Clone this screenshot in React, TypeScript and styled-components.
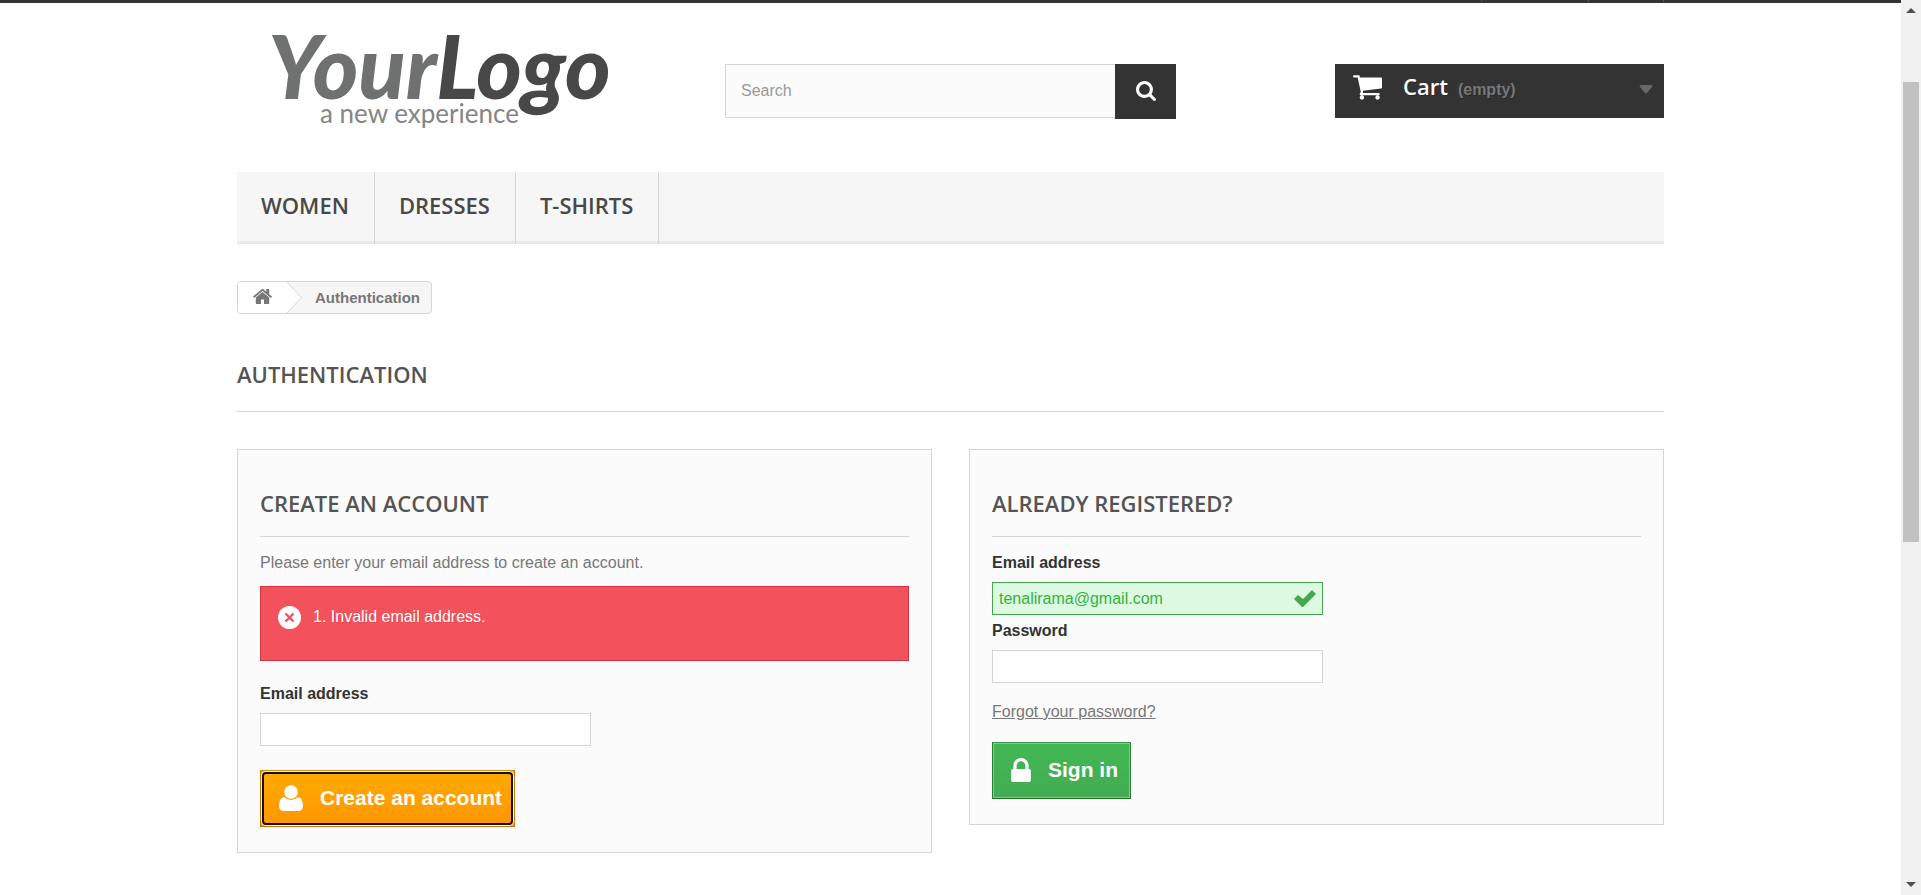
import React from 'react';
import styled, { createGlobalStyle, css } from 'styled-components';

const GlobalStyle = createGlobalStyle`
  * { box-sizing: border-box; }
  body {
    margin: 0;
    background: #fff;
    color: #777;
    font: 16px/22px "Liberation Sans", Arial, sans-serif;
  }
  button, input { font-family: inherit; }
  h1, h2, p, ul, ol { margin: 0; padding: 0; }
`;

const headingFont = '"Open Sans", sans-serif';

const Shell = styled.div`
  display: flex;
  min-height: 100vh;
`;

const Page = styled.div`
  flex: 1;
  min-width: 0;
`;

const Container = styled.div`
  width: calc(100% - 36px);
  max-width: 1427px;
  margin: 0 auto;
`;

const TopBar = styled.div`
  height: 3px;
  background: #333;
`;

const TopLinks = styled(Container)`
  display: flex;
  justify-content: flex-end;
  height: 2px;
`;

const TopLink = styled.span<{ $width: number }>`
  width: ${(p) => p.$width}px;
  border-right: 1px solid #515151;
`;

const Header = styled.header`
  display: grid;
  grid-template-columns: repeat(3, 1fr);
  gap: 37px;
  height: 169px;
`;

const LogoLink = styled.a`
  display: block;
`;

const LogoArt = styled.svg`
  display: block;
  width: 100%;
  height: 140px;
`;

const SearchForm = styled.form`
  display: flex;
  align-items: flex-start;
  padding-top: 61px;
`;

const SearchInput = styled.input`
  flex: 1;
  min-width: 0;
  height: 54px;
  padding: 0 15px;
  border: 1px solid #d6d4d4;
  border-right: 0;
  border-radius: 0;
  background: #fbfbfb;
  color: #686666;
  font-size: 16px;
  &::placeholder { color: #999; opacity: 1; }
`;

const SearchButton = styled.button`
  display: flex;
  align-items: center;
  justify-content: center;
  width: 61px;
  height: 55px;
  padding: 0 0 2px;
  border: 0;
  background: #333;
  color: #fff;
`;

const CartArea = styled.div`
  display: flex;
  justify-content: flex-end;
  align-items: flex-start;
  padding-top: 61px;
`;

const CartLink = styled.a`
  display: flex;
  align-items: center;
  width: 329px;
  height: 54px;
  padding: 0 11px 8px 18px;
  background: #333;
  color: #fff;
  text-decoration: none;
  text-shadow: 1px 1px rgba(0, 0, 0, 0.2);
`;

const CartText = styled.span`
  margin: 2px 0 0 21px;
  color: #777;
  font-weight: bold;
`;

const CartTitle = styled.b`
  margin-right: 10px;
  color: #fff;
  font: 600 22px/22px ${headingFont};
`;

const CartArrow = styled.svg`
  margin: 4px 0 0 auto;
`;

const Nav = styled.nav`
  background: #f6f6f6;
  border-bottom: 3px solid #e9e9e9;
`;

const NavList = styled.ul`
  display: flex;
  list-style: none;
  margin-bottom: -3px;
`;

const NavLink = styled.a`
  display: block;
  height: 72px;
  padding: 20px 25px 0 24px;
  border-right: 1px solid #d6d4d4;
  color: #484848;
  font: 600 22px/26px ${headingFont};
  text-decoration: none;
`;

const Breadcrumb = styled.nav`
  display: inline-flex;
  height: 33px;
  margin-top: 37px;
  border: 1px solid #d6d4d4;
  border-radius: 4px;
  overflow: hidden;
  background: #f6f6f6;
  color: #777;
  font: bold 15px/31px "Liberation Sans", Arial, sans-serif;
`;

const HomeLink = styled.a`
  display: flex;
  justify-content: flex-end;
  align-items: center;
  width: 34px;
  padding-bottom: 3px;
  background: #fff;
  color: #777;
`;

const Chevron = styled.svg`
  display: block;
`;

const Crumb = styled.span`
  padding: 0 11px 0 13px;
`;

const PageHeading = styled.h1`
  margin: 47px 0 37px;
  padding-bottom: 23px;
  border-bottom: 1px solid #d6d4d4;
  color: #555454;
  font: 600 22px/27px ${headingFont};
`;

const Columns = styled.main`
  display: grid;
  grid-template-columns: 1fr 1fr;
  gap: 37px;
  align-items: start;
  padding-bottom: 37px;
`;

const Box = styled.form`
  padding: 40px 22px 25px;
  border: 1px solid #d6d4d4;
  background: #fbfbfb;
`;

const BoxHeading = styled.h2`
  margin-bottom: 15px;
  padding-bottom: 19px;
  border-bottom: 1px solid #d6d4d4;
  color: #555454;
  font: 600 22px/27px ${headingFont};
`;

const ErrorBox = styled.div`
  display: flex;
  height: 75px;
  margin: 12px 0 22px;
  padding: 19px 17px;
  border: 1px solid #d4323d;
  background: #f3515c;
  color: #fff;
  text-shadow: 1px 1px rgba(0, 0, 0, 0.1);
`;

const ErrorList = styled.ol`
  margin-left: 12px;
  list-style-position: inside;
`;

const Label = styled.label`
  display: block;
  margin-bottom: 8px;
  color: #333;
  font-weight: bold;
`;

const Field = styled.div<{ $gap: number }>`
  position: relative;
  width: 331px;
  margin-bottom: ${(p) => p.$gap}px;
`;

const TextInput = styled.input<{ $valid?: boolean }>`
  display: block;
  width: 100%;
  height: 33px;
  padding: 0 40px 0 6px;
  border: 1px solid #d6d4d4;
  border-radius: 0;
  background: #fff;
  color: #333;
  font-size: 16px;
  ${(p) =>
    p.$valid &&
    css`
      border-color: #46a74e;
      background: #ddf9e1;
      color: #35b33f;
    `}
`;

const ValidMark = styled.svg`
  position: absolute;
  right: 7px;
  bottom: 8px;
`;

const ForgotRow = styled.p`
  padding-bottom: 19px;
`;

const ForgotLink = styled.a`
  color: #777;
  text-decoration: underline;
`;

const SubmitButton = styled.button<{ $tone: 'orange' | 'green' }>`
  position: relative;
  display: flex;
  align-items: center;
  gap: 17px;
  height: 57px;
  padding: 0 12px 2px 18px;
  border: 1px solid;
  color: #fff;
  font-size: 21px;
  font-weight: bold;
  white-space: nowrap;
  ${(p) =>
    p.$tone === 'orange'
      ? css`
          border-color: #de8b0b #d4750b #c86e13;
          background: linear-gradient(#ffab00, #ff9600);
          &::after {
            content: '';
            position: absolute;
            inset: 1px;
            border: 2px solid #101010;
            border-radius: 4px;
            box-shadow: 0 0 0 1px #fff;
          }
        `
      : css`
          border-color: #399a49 #247f32 #1a6d27;
          background: linear-gradient(#43b754, #42ac52);
          box-shadow: inset 0 0 0 1px #74d578;
        `}
`;

const ScrollTrack = styled.div`
  position: sticky;
  top: 0;
  display: flex;
  flex-direction: column;
  align-items: center;
  width: 20px;
  height: 100vh;
  padding: 8px 2px;
  background: #f0f0f0;
`;

const ScrollThumb = styled.div`
  width: 100%;
  height: 51.4vh;
  margin: 69px 0 auto;
  background: #c1c1c1;
`;

type GlyphName = 'cart' | 'search' | 'home' | 'lock';

const glyphs: Record<GlyphName, { box: string; width: number; height: number; d: string }> = {
  cart: {
    box: '0 256 1664 1408',
    width: 29,
    height: 25,
    d: 'M640 1536q0 52-38 90t-90 38-90-38-38-90 38-90 90-38 90 38 38 90zm896 0q0 52-38 90t-90 38-90-38-38-90 38-90 90-38 90 38 38 90zm128-1088v512q0 24-16.5 42.5t-40.5 21.5l-1044 122q13 60 13 70 0 16-24 64h920q26 0 45 19t19 45-19 45-45 19h-1024q-26 0-45-19t-19-45q0-11 8-31.5t16-36 21.5-40 15.5-29.5l-177-823h-204q-26 0-45-19t-19-45 19-45 45-19h256q16 0 28.5 6.5t19.5 15.5 13 24.5 8 26 5.5 29.5 4.5 26h1201q26 0 45 19t19 45z',
  },
  search: {
    box: '64 128 1664 1664',
    width: 20,
    height: 20,
    d: 'M1216 832q0-185-131.5-316.5t-316.5-131.5-316.5 131.5-131.5 316.5 131.5 316.5 316.5 131.5 316.5-131.5 131.5-316.5zm512 832q0 52-38 90t-90 38q-54 0-90-38l-343-342q-179 124-399 124-143 0-273.5-55.5t-225-150-150-225-55.5-273.5 55.5-273.5 150-225 225-150 273.5-55.5 273.5 55.5 225 150 150 225 55.5 273.5q0 220-124 399l343 343q37 37 37 90z',
  },
  home: {
    box: '89 250 1614 1286',
    width: 19,
    height: 15,
    d: 'M1472 992v480q0 26-19 45t-45 19h-384v-384h-256v384h-384q-26 0-45-19t-19-45v-480q0-1 .5-3t.5-3l575-474 575 474q1 2 1 6zm223-69l-62 74q-8 9-21 11h-3q-13 0-21-7l-692-577-692 577q-12 8-24 7-13-2-21-11l-62-74q-8-10-7-23.5t11-21.5l719-599q32-26 76-26t76 26l244 204v-195q0-14 9-23t23-9h192q14 0 23 9t9 23v408l219 182q10 8 11 21.5t-7 23.5z',
  },
  lock: {
    box: '320 128 1152 1408',
    width: 20,
    height: 24,
    d: 'M640 768h512v-192q0-106-75-181t-181-75-181 75-75 181v192zm832 96v576q0 40-28 68t-68 28h-960q-40 0-68-28t-28-68v-576q0-40 28-68t68-28h32v-192q0-184 132-316t316-132 316 132 132 316v192h32q40 0 68 28t28 68z',
  },
};

function Glyph({ name }: { name: GlyphName }) {
  const g = glyphs[name];
  return (
    <svg width={g.width} height={g.height} viewBox={g.box} fill="currentColor" aria-hidden="true">
      <path d={g.d} />
    </svg>
  );
}

function Logo() {
  return (
    <LogoArt viewBox="0 0 451 140" preserveAspectRatio="xMinYMin meet" role="img" aria-label="YourLogo, a new experience">
      <text x="31" y="96" fontFamily="Lato, sans-serif" fontWeight="900" fontStyle="italic" fontSize="87">
        <tspan fill="#6f7170">Your</tspan>
        <tspan fill="#484848">Logo</tspan>
      </text>
      <text x="83" y="120" fontFamily="Lato, sans-serif" fontSize="26" fill="#858585">
        a new experience
      </text>
    </LogoArt>
  );
}

export default function App() {
  return (
    <>
      <GlobalStyle />
      <Shell>
        <Page>
          <TopBar>
            <TopLinks>
              <TopLink $width={107} />
              <TopLink $width={107} />
              <TopLink $width={75} />
            </TopLinks>
          </TopBar>
          <Container>
            <Header>
              <LogoLink href="#">
                <Logo />
              </LogoLink>
              <SearchForm role="search">
                <SearchInput type="text" placeholder="Search" aria-label="Search" />
                <SearchButton type="button" aria-label="Submit search">
                  <Glyph name="search" />
                </SearchButton>
              </SearchForm>
              <CartArea>
                <CartLink href="#">
                  <Glyph name="cart" />
                  <CartText>
                    <CartTitle>Cart</CartTitle>
                    (empty)
                  </CartText>
                  <CartArrow width="14" height="9" viewBox="0 0 14 9" aria-hidden="true">
                    <path d="M1 0H13Q14 1 13 2L8 8Q7 9 6 8L1 2Q0 1 1 0Z" fill="#686666" />
                  </CartArrow>
                </CartLink>
              </CartArea>
            </Header>
            <Nav aria-label="Categories">
              <NavList>
                <li><NavLink href="#">WOMEN</NavLink></li>
                <li><NavLink href="#">DRESSES</NavLink></li>
                <li><NavLink href="#">T-SHIRTS</NavLink></li>
              </NavList>
            </Nav>
            <Breadcrumb aria-label="Breadcrumb">
              <HomeLink href="#" aria-label="Home">
                <Glyph name="home" />
              </HomeLink>
              <Chevron width="30" height="31" viewBox="0 0 30 31" aria-hidden="true">
                <path d="M0 0H15L30 15.5L15 31H0Z" fill="#fff" />
                <path d="M15 0L29.5 15.5L15 31" fill="none" stroke="#d6d4d4" />
              </Chevron>
              <Crumb>Authentication</Crumb>
            </Breadcrumb>
            <PageHeading>AUTHENTICATION</PageHeading>
            <Columns>
              <Box>
                <BoxHeading>CREATE AN ACCOUNT</BoxHeading>
                <p>Please enter your email address to create an account.</p>
                <ErrorBox role="alert">
                  <svg width="23" height="23" viewBox="0 0 23 23" aria-hidden="true">
                    <circle cx="11.5" cy="11.5" r="11.5" fill="#fff" />
                    <path d="M7.5 7.5L15.5 15.5M15.5 7.5L7.5 15.5" stroke="#f3515c" strokeWidth="2.4" />
                  </svg>
                  <ErrorList>
                    <li>Invalid email address.</li>
                  </ErrorList>
                </ErrorBox>
                <Label htmlFor="email-create">Email address</Label>
                <Field $gap={24}>
                  <TextInput id="email-create" type="text" />
                </Field>
                <SubmitButton $tone="orange" type="button">
                  <svg width="24" height="26" viewBox="0 0 24 26" aria-hidden="true">
                    <circle cx="12" cy="7" r="6.8" fill="#fff" />
                    <path d="M5 12Q0 13 0 21Q0 26 5 26H19Q24 26 24 21Q24 13 19 12Q12 18 5 12Z" fill="#fff" />
                  </svg>
                  Create an account
                </SubmitButton>
              </Box>
              <Box>
                <BoxHeading>ALREADY REGISTERED?</BoxHeading>
                <Label htmlFor="email">Email address</Label>
                <Field $gap={5}>
                  <TextInput $valid id="email" type="text" defaultValue="tenalirama@gmail.com" />
                  <ValidMark width="22" height="17" viewBox="0 0 22 17" aria-hidden="true">
                    <path d="M0 9L4 5L9 9L18 0L22 4L9 17H8Z" fill="#46a74e" />
                  </ValidMark>
                </Field>
                <Label htmlFor="password">Password</Label>
                <Field $gap={18}>
                  <TextInput id="password" type="password" />
                </Field>
                <ForgotRow>
                  <ForgotLink href="#">Forgot your password?</ForgotLink>
                </ForgotRow>
                <SubmitButton $tone="green" type="button">
                  <Glyph name="lock" />
                  Sign in
                </SubmitButton>
              </Box>
            </Columns>
          </Container>
        </Page>
        <ScrollTrack aria-hidden="true">
          <svg width="10" height="5" viewBox="0 0 10 5">
            <path d="M5 0L10 5H0Z" fill="#505050" />
          </svg>
          <ScrollThumb />
          <svg width="10" height="5" viewBox="0 0 10 5">
            <path d="M0 0H10L5 5Z" fill="#505050" />
          </svg>
        </ScrollTrack>
      </Shell>
    </>
  );
}
